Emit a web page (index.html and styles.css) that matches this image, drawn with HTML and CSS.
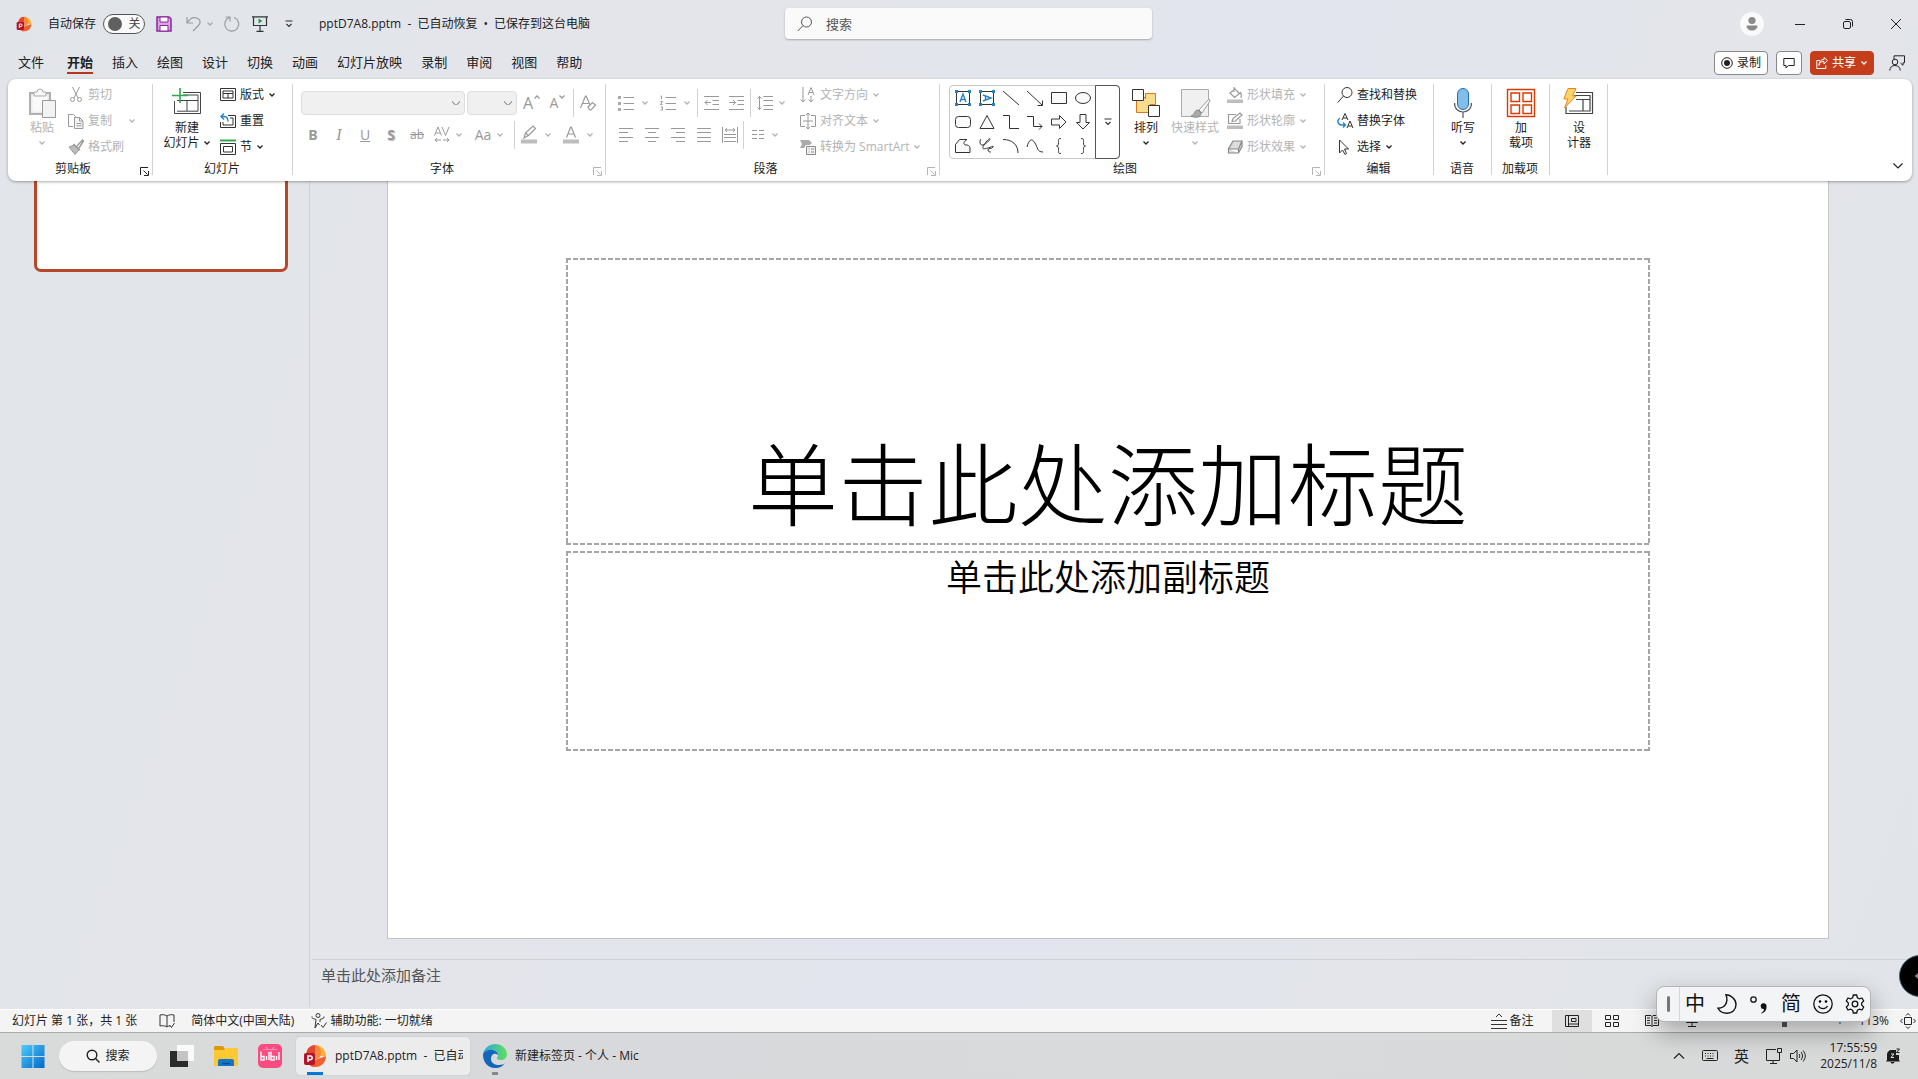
FILE: index.html
```html
<!DOCTYPE html>
<html lang="zh-CN">
<head>
<meta charset="utf-8">
<title>pptD7A8.pptm</title>
<link rel="stylesheet" href="styles.css">
</head>
<body>
<svg class="defs" aria-hidden="true">
  <symbol id="caret" viewBox="0 0 8 8"><path d="M1.5 2.5 4 5l2.5-2.5" fill="none" stroke="currentColor" stroke-width="1.3"/></symbol>
  <symbol id="launch" viewBox="0 0 9 9"><path d="M.5 8V.5H8M3.500 3.500 7.500 7.500M8.500 4v4.500H4" fill="none" stroke="currentColor"/></symbol>
  <symbol id="ppt" viewBox="0 0 24 24">
    <path d="M13 1a11 11 0 0 1 10 11H12z" fill="#ffb03a"/><path d="M12 1C6 1 3 6 3 12s3 11 9 11V12z" fill="#e2482d"/><path d="M12 1c4 0 6 4 6 8s-2 6-6 6z" fill="#f58a3c"/><path d="M23 12c0 6-4 11-11 11-3 0-5-2-6-5z" fill="#f0612f"/>
    <rect x="1" y="9" width="11" height="12" rx="2" fill="#b3142a"/><path d="M5 18v-6h2.300a1.800 1.800 0 0 1 0 3.700H5" fill="none" stroke="#fff" stroke-width="1.500"/>
  </symbol>
</svg>

<header class="titlebar">
  <div class="quick">
    <svg class="i16 logo"><use href="#ppt"/></svg>
    <label class="autosave" for="autosave">自动保存</label>
    <button id="autosave" class="toggle" role="switch" aria-checked="false"><span class="knob"></span>关</button>
    <button class="qbtn save" aria-label="保存"><svg class="i16" viewBox="0 0 16 16"><path d="M1 1h12l2 2v12H1z" fill="#d9a4e2" stroke="#8a259b" stroke-width="1.500"/><path d="M4 1h8v5H4zM4 9.500h8V15H4z" fill="#fff" stroke="#8a259b"/></svg></button>
    <button class="qbtn undo" aria-label="撤消"><svg class="i16" viewBox="0 0 16 16"><path d="M1 1v6h6M1 7c3-5 7-6 10-5 4 2 4 5 1 8l-5 5" fill="none" stroke="#9a9b9e" stroke-width="1.200"/></svg></button>
    <svg class="i8 faint undo-caret"><use href="#caret"/></svg>
    <button class="qbtn redo" aria-label="重复"><svg class="i16" viewBox="0 0 16 16"><path d="M1.500 1h4.500v4.500M10 1.500A7 7 0 1 1 5.500 1.500" fill="none" stroke="#9a9b9e" stroke-width="1.200"/></svg></button>
    <button class="qbtn show" aria-label="放映"><svg class="i16" viewBox="0 0 16 16"><path d="M0 .8h16M1.500 1v8.500h13V1M8 9.500V15M4.500 15.300h7" fill="none" stroke="#333" stroke-width="1.200"/><path d="M6.500 2.500v5l4-2.500z" fill="#1e9a47"/></svg></button>
    <button class="qbtn more" aria-label="自定义"><svg class="i8" viewBox="0 0 8 8"><path d="M.5 1h7M1.500 4 4 6.500 6.500 4" fill="none" stroke="#333" stroke-width="1.200"/></svg></button>
    <span class="doc">pptD7A8.pptm&nbsp; -&nbsp; 已自动恢复<i class="dot">•</i>已保存到这台电脑</span>
  </div>
  <div class="search">
    <svg class="i16" viewBox="0 0 16 16"><circle cx="9.500" cy="6" r="5" fill="none" stroke="#555"/><path d="M6 9.500.8 15" stroke="#555"/></svg>
    <input type="text" placeholder="搜索" aria-label="搜索">
  </div>
  <div class="win">
    <svg class="avatar" viewBox="0 0 24 24"><circle cx="12" cy="12" r="12" fill="#fafafa"/><circle cx="12" cy="8.500" r="3.600" fill="#8a8a8a"/><path d="M6.500 13.500h11c0 3.500-2.500 5-5.500 5s-5.500-1.500-5.500-5z" fill="#8a8a8a"/></svg>
    <button aria-label="最小化"><svg class="i12" viewBox="0 0 12 12"><path d="M1 6.500h10" stroke="#222"/></svg></button>
    <button aria-label="还原"><svg class="i12" viewBox="0 0 12 12"><rect x="1.500" y="3.500" width="7" height="7" rx="1.500" fill="none" stroke="#222"/><path d="M3.500 1.500h5a2 2 0 0 1 2 2v5" fill="none" stroke="#222"/></svg></button>
    <button aria-label="关闭"><svg class="i12" viewBox="0 0 12 12"><path d="m1 1 10 10M11 1 1 11" stroke="#222"/></svg></button>
  </div>
</header>

<nav class="tabs">
  <a href="#file" class="file">文件</a><a href="#home" class="on">开始</a><a href="#insert">插入</a><a href="#draw">绘图</a><a href="#design">设计</a><a href="#trans">切换</a><a href="#anim">动画</a><a href="#shows">幻灯片放映</a><a href="#rec">录制</a><a href="#review">审阅</a><a href="#view">视图</a><a href="#help">帮助</a>
  <div class="tab-actions">
    <button class="pill"><svg class="i12" viewBox="0 0 12 12"><circle cx="6" cy="6" r="5.300" fill="none" stroke="#222"/><circle cx="6" cy="6" r="3" fill="#222"/></svg>录制</button>
    <button class="pill note" aria-label="批注"><svg class="i12" viewBox="0 0 12 12"><path d="M.8 1.500h10.400v7H5.500L3 11V8.500H.8z" fill="none" stroke="#222"/></svg></button>
    <button class="pill share"><svg class="i12" viewBox="0 0 12 12"><path d="M4 3.500H.8v8h9V8.500M3 8.500c.5-3 2-4 5-4V7l3.500-3.500L8 .5v2c-3 0-5 2-5 6z" fill="none" stroke="#fff"/></svg>共享<svg class="i8"><use href="#caret"/></svg></button>
    <button class="plain" aria-label="在场"><svg class="i16" viewBox="0 0 16 16"><path d="M5 4V.8h10.500v7h-1.500v2.500L11.500 8" fill="none" stroke="#222"/><circle cx="6" cy="7" r="2.800" fill="none" stroke="#222"/><path d="M.8 15.500c0-3 2-5 5.200-5s5.200 2 5.200 5" fill="none" stroke="#222"/></svg></button>
  </div>
</nav>

<section class="ribbon">
  <div class="group g-clip">
    <div class="body">
      <button class="big off paste"><svg class="i30" viewBox="0 0 30 30"><path d="M3 5h20v21H3z" fill="#ececec" stroke="#b0b0b0" stroke-width="2"/><path d="M5.500 7.500h15v16h-15z" fill="#fafafa"/><path d="M7 8V4h3a3 3 0 0 1 6 0h3v4z" fill="#f8f8f8" stroke="#aaa"/><path d="M15.500 12.500h13v17h-13z" fill="#f3f3f3" stroke="#999"/></svg><span>粘贴</span><svg class="i8"><use href="#caret"/></svg></button>
      <div class="col">
        <button class="sm off"><svg class="i16" viewBox="0 0 16 16"><path d="m4.500 0 5.500 11M11.500 0 6 11" stroke="#999" fill="none"/><circle cx="4.500" cy="12.500" r="2" fill="none" stroke="#999"/><circle cx="11.500" cy="12.500" r="2" fill="none" stroke="#999"/></svg>剪切</button>
        <button class="sm off"><svg class="i16" viewBox="0 0 16 16"><path d="M5 13.500H.5V1.500h5l2 2" fill="none" stroke="#999"/><path d="M6.500 4.500h5l3.500 3.500v7.500H6.500zM11.500 4.500V8H15M8.500 10.500h5M8.500 12.800h5" fill="#f3f3f3" stroke="#999"/></svg>复制<svg class="i8 far"><use href="#caret"/></svg></button>
        <button class="sm off"><svg class="i16" viewBox="0 0 16 16"><path d="M1 8l5-2 5 5-4 4.500z" fill="#bbb" stroke="#999"/><path d="M5.500 5 12 11M9 7l5.500-6 1 1L11 9" fill="none" stroke="#999" stroke-width="1.400"/></svg>格式刷</button>
      </div>
    </div>
    <div class="label"><span>剪贴板</span><svg class="i9"><use href="#launch"/></svg></div>
  </div>

  <div class="group g-slides">
    <div class="body">
      <button class="big new"><svg class="i30" viewBox="0 0 30 30"><path d="M11 4.500h17.500v21h-26V13M5 23.200h21V7H11M15 12.500h11M15 12.500v10.500M5 12.500h10" fill="none" stroke="#444"/><path d="M8 0v15M0 7.500h16" stroke="#2fa84f" stroke-width="1.600"/></svg><span>新建</span><span>幻灯片<svg class="i8"><use href="#caret"/></svg></span></button>
      <div class="col">
        <button class="sm"><svg class="i16" viewBox="0 0 16 16"><path d="M.5 1.500h15v12H.5zM3 4h10v7H3zM3 6.500h10M8 6.500V11" fill="none" stroke="#333"/></svg>版式<svg class="i8"><use href="#caret"/></svg></button>
        <button class="sm"><svg class="i16" viewBox="0 0 16 16"><path d="M8 2.500h7.500v12H.5V9M10 5h3v7H3V9" fill="none" stroke="#333"/><path d="M4 .5 1 3.500l3 3M1 3.500h3c3 0 4 1.500 4 5" fill="none" stroke="#2583c7" stroke-width="1.400"/></svg>重置</button>
        <button class="sm"><svg class="i16" viewBox="0 0 16 16"><path d="M0 1.500h16" stroke="#2fa84f" stroke-width="2"/><path d="M.5 4.500h15v11H.5zM3.500 7.500h9v5.500h-9z" fill="none" stroke="#333"/></svg>节<svg class="i8"><use href="#caret"/></svg></button>
      </div>
    </div>
    <div class="label"><span>幻灯片</span></div>
  </div>

  <div class="group g-font off">
    <div class="rows">
      <div class="row">
        <select class="family" disabled aria-label="字体"><option></option></select>
        <select class="size" disabled aria-label="字号"><option></option></select>
        <button class="ic grow">A<svg class="i8 flip"><use href="#caret"/></svg></button>
        <button class="ic shrink">A<svg class="i8"><use href="#caret"/></svg></button>
        <i class="bar"></i>
        <button class="ic" aria-label="清除格式"><svg class="i16" viewBox="0 0 16 16"><path d="M.5 13 5.500 1h.6l4 9M2.500 8.500h6M8 12l4.500-4.500 3 2.500-4.500 5H9.500z" fill="none" stroke="#999" stroke-width="1.200"/></svg></button>
      </div>
      <div class="row styles">
        <button class="ic wide b">B</button><button class="ic wide it">I</button><button class="ic wide u">U</button><button class="ic wide s">S</button><button class="ic wide st">ab</button>
        <button class="ic" aria-label="字符间距"><svg class="i16" viewBox="0 0 16 16"><path d="M.5 8.500 4 0l3.500 8.500M1.800 6h4.400M8 0l3.500 8.500L15 0M.8 13H7M3 11l-2 2 2 2M9 13h6M13 11l2 2-2 2" fill="none" stroke="#999"/></svg></button><svg class="i8 sp"><use href="#caret"/></svg>
        <button class="ic aa gap">Aa</button><svg class="i8 sp"><use href="#caret"/></svg>
        <i class="bar lead"></i>
        <button class="ic" aria-label="突出显示"><svg class="i18" viewBox="0 0 16 18"><path d="M0 13.500h16v4H0z" fill="#bdbdbd"/><path d="M3 12l1.500-5L12 0l2.500 2.500-7 7zM4.500 7 7.500 9.500" fill="none" stroke="#999" stroke-width="1.200"/></svg></button><svg class="i8 sp2"><use href="#caret"/></svg>
        <button class="ic gap" aria-label="字体颜色"><svg class="i18" viewBox="0 0 16 18"><path d="M0 13.500h16v4H0z" fill="#bdbdbd"/><path d="M3.500 11.500 7.700 1h.6l4.200 10.500M5 8h6" fill="none" stroke="#999" stroke-width="1.200"/></svg></button><svg class="i8 sp2"><use href="#caret"/></svg>
      </div>
    </div>
    <div class="label"><span>字体</span><svg class="i9"><use href="#launch"/></svg></div>
  </div>

  <div class="group g-para off">
    <div class="body">
    <div class="rows">
      <div class="row">
        <button class="ic" aria-label="项目符号"><svg class="i16" viewBox="0 0 16 16"><path d="M5.500 2.500H16M5.500 8.500H16M5.500 14.500H16" stroke="#999"/><path d="M0 1h3v3H0zM0 7h3v3H0zM0 13h3v3H0z" fill="#aaa"/></svg></button><svg class="i8 sp2"><use href="#caret"/></svg>
        <button class="ic gap" aria-label="编号"><svg class="i16" viewBox="0 0 16 16"><path d="M5.500 2.500H16M5.500 8.500H16M5.500 14.500H16M.5 1h1v3M.5 6.500h2L.5 9.500h2M.5 12h2v3h-2" fill="none" stroke="#999"/></svg></button><svg class="i8 sp2"><use href="#caret"/></svg>
        <i class="bar near"></i>
        <button class="ic" aria-label="减少缩进"><svg class="i16" viewBox="0 0 16 16"><path d="M0 1.500h15M8.500 5.500H15M8.500 9.500H15M0 14.500h15M1 7.500h6M3.500 5 1 7.500 3.500 10" fill="none" stroke="#999"/></svg></button>
        <button class="ic wide" aria-label="增加缩进"><svg class="i16" viewBox="0 0 16 16"><path d="M0 1.500h15M8.500 5.500H15M8.500 9.500H15M0 14.500h15M.5 7.500h6M4 5l2.500 2.500L4 10" fill="none" stroke="#999"/></svg></button>
        <i class="bar flush"></i>
        <button class="ic" aria-label="行距"><svg class="i16" viewBox="0 0 16 16"><path d="M6.500 1.500H16M6.500 5.500H16M6.500 10.500H16M6.500 14.500H16M2.500 1v14M.5 3.500l2-2 2 2M.5 12.500l2 2 2-2" fill="none" stroke="#999"/></svg></button><svg class="i8 sp"><use href="#caret"/></svg>
      </div>
      <div class="row styles">
        <button class="ic wide" aria-label="左对齐"><svg class="i16" viewBox="0 0 16 16"><path d="M1 1.500h14M1 5.500h9M1 10.500h14M1 14.500h9" stroke="#999"/></svg></button><button class="ic wide" aria-label="居中"><svg class="i16" viewBox="0 0 16 16"><path d="M1 1.500h14M4 5.500h8M1 10.500h14M4 14.500h8" stroke="#999"/></svg></button><button class="ic wide" aria-label="右对齐"><svg class="i16" viewBox="0 0 16 16"><path d="M1 1.500h14M6 5.500h9M1 10.500h14M6 14.500h9" stroke="#999"/></svg></button><button class="ic wide" aria-label="两端对齐"><svg class="i16" viewBox="0 0 16 16"><path d="M1 1.500h14M1 5.500h14M1 10.500h14M1 14.500h14" stroke="#999"/></svg></button><button class="ic wide" aria-label="分散对齐"><svg class="i16" viewBox="0 0 16 16"><path d="M.5 0v16M15.500 0v16M2 7.500h12M2 10.500h12M2 14.500h12M3 3h10M5 1 3 3l2 2M11 1l2 2-2 2" fill="none" stroke="#999"/></svg></button>
        <i class="bar flush"></i>
        <button class="ic" aria-label="分栏"><svg class="i12" viewBox="0 0 12 12"><path d="M0 1.500h5M0 5.500h5M0 9.500h5M7 1.500h5M7 5.500h5M7 9.500h5" stroke="#999"/></svg></button><svg class="i8 sp"><use href="#caret"/></svg>
      </div>
    </div>
    <div class="col">
      <button class="sm off"><svg class="i16" viewBox="0 0 16 16"><path d="M3 0v15M.5 12.500 3 15l2.500-2.500M11 9v6M8.500 12.500 11 15l2.500-2.500M8 8l3-7.500L14 8M9 5.500h4" fill="none" stroke="#999"/></svg>文字方向<svg class="i8"><use href="#caret"/></svg></button>
      <button class="sm off"><svg class="i16" viewBox="0 0 16 16"><path d="M5 2.500H.5v11H5M11 2.500h4.500v11H11M8 0v16M6 2l2-2 2 2M6 14l2 2 2-2M3 8h10" fill="none" stroke="#999"/></svg>对齐文本<svg class="i8"><use href="#caret"/></svg></button>
      <button class="sm off"><svg class="i16" viewBox="0 0 16 16"><path d="M0 1h9l3 3-2 2H6L4 9H0l2-4z" fill="#aaa"/><path d="M6.500 7.500h9v8h-9zM8.500 10h1M11 10h3M8.500 13h1M11 13h3" fill="#f3f3f3" stroke="#888"/></svg>转换为 SmartArt<svg class="i8"><use href="#caret"/></svg></button>
    </div>
    </div>
    <div class="label"><span>段落</span><svg class="i9"><use href="#launch"/></svg></div>
  </div>

  <div class="group g-draw">
    <div class="body">
      <div class="gallery">
        <div class="shapes">
          <svg class="i16" viewBox="0 0 16 16"><path d="M1.500 1.500h13v13h-13z" fill="none" stroke="#333"/><path d="M0 0h3v3H0zM13 0h3v3h-3zM0 13h3v3H0zM13 13h3v3h-3z" fill="#2583c7"/><path d="M5 12l3-8 3 8M6 9.500h4" fill="none" stroke="#2583c7" stroke-width="1.400"/></svg>
          <svg class="i16" viewBox="0 0 16 16"><path d="M1.500 1.500h13v13h-13z" fill="none" stroke="#333"/><path d="M0 0h3v3H0zM13 0h3v3h-3zM0 13h3v3H0zM13 13h3v3h-3z" fill="#2583c7"/><path d="M4 5l8 3-8 3M6.500 6v4" fill="none" stroke="#2583c7" stroke-width="1.400"/></svg>
          <svg class="i16" viewBox="0 0 16 16"><path d="m0 1 16 14" stroke="#333"/></svg>
          <svg class="i16" viewBox="0 0 16 16"><path d="m0 1 15 14M15.500 10.500v5h-5" fill="none" stroke="#333"/></svg>
          <svg class="i16" viewBox="0 0 16 16"><path d="M.5 2.500h15v11H.5z" fill="#fafafa" stroke="#333"/></svg>
          <svg class="i16" viewBox="0 0 16 16"><ellipse cx="8" cy="8" rx="7.500" ry="5.500" fill="#fafafa" stroke="#333"/></svg>
          <svg class="i16" viewBox="0 0 16 16"><rect x=".5" y="2.500" width="15" height="11" rx="3" fill="#fafafa" stroke="#333"/></svg>
          <svg class="i16" viewBox="0 0 16 16"><path d="M8 1.500 15 14.500H1z" fill="#fafafa" stroke="#333"/></svg>
          <svg class="i16" viewBox="0 0 16 16"><path d="M0 1.500h6.500v13H16" fill="none" stroke="#333"/></svg>
          <svg class="i16" viewBox="0 0 16 16"><path d="M0 2.500h6.500v10H15M12 9.500l3 3-3 3" fill="none" stroke="#333"/></svg>
          <svg class="i16" viewBox="0 0 16 16"><path d="M.5 5h8V1.500L15 8l-6.500 6.500V11h-8z" fill="#fafafa" stroke="#333"/></svg>
          <svg class="i16" viewBox="0 0 16 16"><path d="M5 .5h6v8h3.500L8 15 1.500 8.500H5z" fill="#fafafa" stroke="#333"/></svg>
          <svg class="i16" viewBox="0 0 16 16"><path d="M.5 14.500v-8l4-5h7.500c-3 2-4 4-2 5.500 3-.5 5 1 5 3v4.500z" fill="#fafafa" stroke="#333"/></svg>
          <svg class="i16" viewBox="0 0 16 16"><path d="M2 1C0 3 1 8 4 7s7-5 7-6-3 1-6 6 0 4 4 3 6-3 5-1-5 1-5 3 2 2 3 2" fill="none" stroke="#333"/></svg>
          <svg class="i16" viewBox="0 0 16 16"><path d="M0 1.500c9 0 15 5 15 13.500" fill="none" stroke="#333"/></svg>
          <svg class="i16" viewBox="0 0 16 16"><path d="M0 9c2-8 5-9 8-4s2 9 8 9" fill="none" stroke="#333"/></svg>
          <svg class="i16" viewBox="0 0 16 16"><path d="M10 .5c-3 0-2.500 1-2.500 4S7 8 5.500 8c1.500 0 2 .5 2 3.500s-.5 4 2.500 4" fill="none" stroke="#333"/></svg>
          <svg class="i16" viewBox="0 0 16 16"><path d="M6 .5c3 0 2.500 1 2.500 4S9 8 10.500 8c-1.500 0-2 .5-2 3.500s.5 4-2.500 4" fill="none" stroke="#333"/></svg>
        </div>
        <button class="expand" aria-label="其他形状"><svg class="i8" viewBox="0 0 8 8"><path d="M.5 1h7M1.500 4 4 6.500 6.500 4" fill="none" stroke="#333" stroke-width="1.200"/></svg></button>
      </div>
      <button class="big arrange"><svg class="i30" viewBox="0 0 30 30"><path d="M5.500 9.500h14v15h-14z" fill="#f9dd8f" stroke="#e0761a"/><path d="M14.500 5.500h10v11h-10z" fill="#f9dd8f" stroke="#e0761a"/><path d="M7 11h12v12H7z" fill="#f9dd8f"/><path d="M1.500 1.500h11v11h-11zM17.500 17.500h11v11h-11z" fill="#fff" stroke="#333"/></svg><span>排列</span><svg class="i8"><use href="#caret"/></svg></button>
      <button class="big off quickstyle"><svg class="i30" viewBox="0 0 30 30"><path d="M1.500 1.500h27v27h-27z" fill="#f0f0f0" stroke="#aaa"/><path d="M29 11 19 22l3 3 8-12z" fill="#fafafa" stroke="#999"/><path d="M18 22c-4 0-3 5-7 6 4 2 10 2 10-3z" fill="#aaa" stroke="#888"/></svg><span>快速样式</span><svg class="i8"><use href="#caret"/></svg></button>
      <div class="col">
        <button class="sm off"><svg class="i16" viewBox="0 0 16 16"><path d="M0 12.500h16v3.500H0z" fill="#bdbdbd"/><path d="M3 6l5-4 4.500 4.500-5 4zM7 0v5M13 5c2 2 1.500 4 1 6" fill="none" stroke="#999" stroke-width="1.200"/></svg>形状填充<svg class="i8"><use href="#caret"/></svg></button>
        <button class="sm off"><svg class="i16" viewBox="0 0 16 16"><path d="M0 12.500h16v3.500H0z" fill="#bdbdbd"/><path d="M9 1.500H1.500v9H13V6M5 8.500l1-3L13 0l2 2-6.500 6z" fill="none" stroke="#999" stroke-width="1.200"/></svg>形状轮廓<svg class="i8"><use href="#caret"/></svg></button>
        <button class="sm off"><svg class="i16" viewBox="0 0 16 16"><path d="M6 2h9l-3.500 8H1.500zM15 2v5.500L11.500 14v-4M1.500 10v4h10" fill="#ddd" stroke="#888" stroke-width="1.200"/></svg>形状效果<svg class="i8"><use href="#caret"/></svg></button>
      </div>
    </div>
    <div class="label off"><span>绘图</span><svg class="i9"><use href="#launch"/></svg></div>
  </div>

  <div class="group g-edit">
    <div class="body"><div class="col">
      <button class="sm"><svg class="i16" viewBox="0 0 16 16"><circle cx="10" cy="5.500" r="5" fill="none" stroke="#333"/><path d="M6.500 9 .8 15.500" stroke="#333"/></svg>查找和替换</button>
      <button class="sm"><svg class="i16" viewBox="0 0 16 16"><path d="m5 7 3-6.500L11 7M6 5h4M10 15l3-7 3 7M11 13h4" fill="none" stroke="#333"/><path d="M3 5c-3 2-3 6 1 7h4M6 9.500 8.500 12 6 14.500" fill="none" stroke="#2583c7" stroke-width="1.300"/></svg>替换字体</button>
      <button class="sm"><svg class="i16" viewBox="0 0 16 16"><path d="M2.500 1v13l3-3 2.500 4.500 1.500-1L7.500 10h4z" fill="none" stroke="#333"/></svg>选择<svg class="i8"><use href="#caret"/></svg></button>
    </div></div>
    <div class="label"><span>编辑</span></div>
  </div>

  <div class="group g-one">
    <div class="body"><button class="big"><svg class="i30" viewBox="0 0 30 30"><rect x="9.500" y=".5" width="11" height="21" rx="5.500" fill="#83bdea" stroke="#1f6fb5"/><path d="M6.500 15c0 12 17 12 17 0M15 24v6" fill="none" stroke="#555" stroke-width="1.200"/></svg><span>听写</span><svg class="i8"><use href="#caret"/></svg></button></div>
    <div class="label"><span>语音</span></div>
  </div>
  <div class="group g-one">
    <div class="body"><button class="big"><svg class="i30" viewBox="0 0 30 30"><path d="M1.500 1.500h27v27h-27zM5 5h8.500v8.500H5zM17 5h8.500v8.500H17zM5 17h8.500v8.500H5zM17 17h8.500v8.500H17z" fill="none" stroke="#d83b01" stroke-width="1.400"/></svg><span>加</span><span>载项</span></button></div>
    <div class="label"><span>加载项</span></div>
  </div>
  <div class="group g-one">
    <div class="body"><button class="big"><svg class="i30" viewBox="0 0 30 30"><path d="M12 4.500h16.500v21H2V19M10 7.500h16v15.500H5M12 11.500h14M19 11.500V23" fill="none" stroke="#444" stroke-width="1.200"/><path d="M4 .5h8L8.500 8H12L.5 20 4 11H-.2z" fill="#fdd46b" stroke="#e8861d"/></svg><span>设</span><span>计器</span></button></div>
    <div class="label"></div>
  </div>
  <button class="collapse" aria-label="折叠功能区"><svg class="i12" viewBox="0 0 12 12"><path d="m1.500 3.500 4.500 4.500 4.500-4.500" fill="none" stroke="#222" stroke-width="1.200"/></svg></button>
</section>

<main class="work">
  <aside class="thumbs"><div class="thumb"></div></aside>
  <div class="stage">
    <article class="slide">
      <div class="ph ph-title"><h1>单击此处添加标题</h1></div>
      <div class="ph ph-sub"><h2>单击此处添加副标题</h2></div>
    </article>
    <div class="notes">单击此处添加备注</div>
  </div>
</main>

<footer class="status">
  <span class="count">幻灯片 第 1 张，共 1 张</span>
  <svg class="i16 book" viewBox="0 0 16 16"><path d="M8 3C6 1.500 3 1.500 1 2v11c2-.5 5-.5 7 1 1-1 2-1 3-1M8 3c2-1.500 5-1.500 7-1v7M8 3v11M10.500 12l2 2.500 3-4.500" fill="none" stroke="#333"/></svg>
  <span>简体中文(中国大陆)</span>
  <svg class="i16 acc" viewBox="0 0 16 16"><circle cx="7" cy="2.500" r="2" fill="none" stroke="#333"/><path d="M1 3.500c-1 2 3 2.500 4 3L4 15l3-5 1.500 2M13 3.500c1 2-3 2.500-4 3V9M10 12l2 2.500 3.500-5" fill="none" stroke="#333"/></svg>
  <span>辅助功能: 一切就绪</span>
  <div class="views">
    <button class="vnote"><svg class="i16" viewBox="0 0 16 16"><path d="M0 7.500h16M0 11.500h16M0 15.500h16M5 4l3-3 3 3" fill="none" stroke="#333"/></svg>备注</button>
    <button class="vbtn on" aria-label="普通"><svg class="i14" viewBox="0 0 14 14"><path d="M.5 1.500h13v11H.5zM3.500 1.500v11M3.500 10h10M6.500 4.500h4.500v3H6.500z" fill="none" stroke="#222"/></svg></button>
    <button class="vbtn" aria-label="浏览"><svg class="i14" viewBox="0 0 14 14"><path d="M.5 1.500h5v4h-5zM8.500 1.500h5v4h-5zM.5 8.500h5v4h-5zM8.500 8.500h5v4h-5z" fill="none" stroke="#222"/></svg></button>
    <button class="vbtn" aria-label="阅读"><svg class="i14" viewBox="0 0 14 14"><path d="M.5 1.500H6l1 1 1-1h5.500v10H8l-1 1-1-1H.5zM7 2.500v10M2 4h3M2 6.500h3M2 9h3M9 4h3M9 6.500h3M9 9h3" fill="none" stroke="#222"/></svg></button>
    <button class="vbtn" aria-label="放映"><svg class="i14" viewBox="0 0 14 14"><path d="M.5 1.500h13M1.500 1.500v7h11v-7M7 8.500v4M3 12.500h8" fill="none" stroke="#222"/></svg></button>
    <input class="zoom" type="range" min="0" max="100" value="53" aria-label="缩放">
    <span class="plus">+</span>
    <span class="pct">113%</span>
    <svg class="i16" viewBox="0 0 16 16"><path d="M4.500 4.500h7v7h-7zM6 2.500l2-2 2 2M6 13.500l2 2 2-2M2.500 6l-2 2 2 2M13.500 6l2 2-2 2" fill="none" stroke="#222"/></svg>
  </div>
</footer>

<div class="taskbar">
  <button class="tb" aria-label="开始"><svg class="i24" viewBox="0 0 24 24"><defs><linearGradient id="wg" x1="0" y1="0" x2="1" y2="1"><stop offset="0" stop-color="#4ccbfa"/><stop offset="1" stop-color="#0468c8"/></linearGradient></defs><path d="M.5 1h11v11H.5zM12.500 1h11v11h-11zM.5 13h11v11H.5zM12.500 13h11v11h-11z" fill="url(#wg)"/></svg></button>
  <button class="tsearch"><svg class="i14" viewBox="0 0 14 14"><circle cx="6" cy="6" r="4.800" fill="none" stroke="#222" stroke-width="1.400"/><path d="m9.500 9.500 4 4" stroke="#222" stroke-width="1.400"/></svg>搜索</button>
  <button class="tb" aria-label="任务视图"><svg class="i24" viewBox="0 0 24 24"><path d="M7 1h17v16H7z" fill="#fafafa"/><path d="M0 7h18v16H0z" fill="#2b2b2b"/><path d="M7 7h11v10H7z" fill="#c4c4c4"/></svg></button>
  <button class="tb" aria-label="文件资源管理器"><svg class="i24" viewBox="0 0 24 24"><path d="M0 3a1 1 0 0 1 1-1h8l2 3v4H0z" fill="#dc9a10"/><path d="M0 6h10l2-2h12v18H0z" fill="#fcc935"/><path d="M4 22v-5a2 2 0 0 1 2-2h12a2 2 0 0 1 2 2v5z" fill="#1375c9"/><path d="M8 19.500h8" stroke="#0a4d90" stroke-width="1.500"/></svg></button>
  <button class="tb" aria-label="bilibili"><svg class="i24" viewBox="0 0 24 24"><rect width="24" height="24" rx="5" fill="#fb4c82"/><path d="M5 5.500h14M8 3l2 2.500M16 3l-2 2.500" stroke="#ff8fb3" stroke-width="1.200"/><path d="M3 7.500V16h3v-3.500H3M8.500 12v4M11 8v8M13 7.500V16h3v-3.500h-3M18.500 12v4M21 8v8" fill="none" stroke="#fff" stroke-width="1.400"/></svg></button>
  <button class="task on"><svg class="i24"><use href="#ppt"/></svg><span>pptD7A8.pptm&nbsp; -&nbsp; 已自动恢复</span></button>
  <button class="task edge"><svg class="i24" viewBox="0 0 24 24"><defs><linearGradient id="eg" x1="0" y1="0" x2="1" y2="0"><stop offset="0" stop-color="#2aa6e4"/><stop offset="1" stop-color="#5fe05a"/></linearGradient></defs><path d="M0 11C1 4 6 0 12 0c7 0 12 5 12 10 0 4-3 6-6 6-3 0-4-1-4-2s1-1 1-3c0-3-3-5-6-5-5 0-8 3-9 5z" fill="url(#eg)"/><path d="M0 11c0-3 4-5 8-5 4 0 7 2 7 5-4-3-7 0-7 4 0 4 4 6 8 6 3 0 5-1 6-2-2 3-5 5-10 5C5 24 0 18 0 11z" fill="#1467b8"/></svg><span>新建标签页 - 个人 - Mic</span></button>
  <div class="tray">
    <svg class="i12 up" viewBox="0 0 12 12"><path d="m1 8.500 5-5 5 5" fill="none" stroke="#222" stroke-width="1.200"/></svg>
    <svg class="i16 kb" viewBox="0 0 16 16"><rect x=".5" y="2.500" width="15" height="10" rx="1" fill="none" stroke="#222"/><path d="M3 5.500h10M3 8h10" stroke="#222" stroke-dasharray="1 1.500"/><path d="M4.500 10.500h7" stroke="#222"/></svg>
    <span class="lang">英</span>
    <svg class="i16" viewBox="0 0 16 16"><path d="M10 1.500H.5v11h13V9M7 12.500v3M4 15.500h7M11.500.5h4v4h-4zM13.500 4.500V9" fill="none" stroke="#222"/></svg>
    <svg class="i16 spk" viewBox="0 0 16 16"><path d="M.5 5.500h3L7 2v12l-3.500-3.500h-3zM9 6c1 1.500 1 2.500 0 4M11 4c2 2.500 2 5.500 0 8M13 2.500c3 3.500 3 7.500 0 11" fill="none" stroke="#222"/></svg>
    <time class="clock"><span>17:55:59</span><span>2025/11/8</span></time>
    <svg class="i16 bell" viewBox="0 0 16 16"><path d="M2 12V7c0-3 2-5 5-5h4v5h3v5l1 1.500H1zM5.500 14h4c-.5 2-3.500 2-4 0z" fill="#1c1c1c"/><path d="M6 6h3L6 9.500h3" fill="none" stroke="#ddd"/><path d="M11.500 1h3l-3 3.500h3" fill="none" stroke="#1c1c1c"/></svg>
  </div>
</div>

<div class="ime">
  <div class="grip"><i></i></div>
  <span>中</span>
  <svg class="i20" viewBox="0 0 20 20"><path d="M9 .8C14 1 19 5 19 10.500 19 16 15 19.200 10 19.200c-4 0-7.500-2-9-5C7 14.500 12 9 9 .8z" fill="none" stroke="#111" stroke-width="1.400"/></svg>
  <svg class="i20" viewBox="0 0 20 20"><circle cx="4.500" cy="5.500" r="2.700" fill="none" stroke="#111" stroke-width="1.300"/><path d="M12 19c2-1 3-2.500 3-4a2.900 2.900 0 1 1 2.500-3c.3 3-1 6.500-5 7.500z" fill="#111"/></svg>
  <span>简</span>
  <svg class="i20" viewBox="0 0 20 20"><circle cx="10" cy="10" r="9.200" fill="none" stroke="#111" stroke-width="1.300"/><circle cx="7" cy="7.500" r="1.300"/><circle cx="13" cy="7.500" r="1.300"/><path d="M5.500 12c2 3.500 7 3.500 9 0" fill="none" stroke="#111" stroke-width="1.300"/></svg>
  <svg class="i20" viewBox="0 0 20 20"><path d="M8.300 1h3.400l.6 2.700 2 1.100L17 4l1.700 3-2 1.900v2.200l2 1.900L17 16l-2.700-.8-2 1.100-.6 2.700H8.300l-.6-2.700-2-1.100L3 16l-1.700-3 2-1.900V8.900l-2-1.900L3 4l2.700.8 2-1.100z" fill="none" stroke="#111" stroke-width="1.300" stroke-linejoin="round"/><circle cx="10" cy="10" r="2.800" fill="none" stroke="#111" stroke-width="1.300"/></svg>
</div>
<button class="dock" aria-label="展开"><svg class="i12" viewBox="0 0 12 12"><path d="M10 1 4 6l6 5" fill="none" stroke="#999" stroke-width="1.600"/></svg></button>
</body>
</html>
```
FILE: styles.css
```css
* { box-sizing: border-box; }
html, body { height: 100%; margin: 0; }
body {
  display: flex; flex-direction: column; overflow: hidden; position: relative;
  font: 12px/16px "Open Sans", "Noto Sans CJK SC", sans-serif; color: #222;
  background: linear-gradient(110deg, #e1e5ea, #e4e5ea 30%, #e2e5ee 55%, #e3e5ea 75%, #e1e4e9);
}
button, input, select { font: inherit; color: inherit; border: 0; background: none; padding: 0; margin: 0; }
button { display: flex; align-items: center; justify-content: center; white-space: nowrap; }
a { color: inherit; text-decoration: none; }
svg { flex: none; display: block; overflow: visible; }
.defs { position: absolute; width: 0; height: 0; }
.i8 { width: 8px; height: 8px; }
.i9 { width: 9px; height: 9px; }
.i12 { width: 12px; height: 12px; }
.i14 { width: 14px; height: 14px; }
.i16 { width: 16px; height: 16px; }
.i18 { width: 16px; height: 18px; }
.i20 { width: 20px; height: 20px; }
.i24 { width: 24px; height: 24px; }
.i30 { width: 30px; height: 30px; }
.faint { color: #aaa; }

/* title bar */
.titlebar { flex: none; height: 47px; display: grid; grid-template-columns: 785fr 367px 766fr; align-items: center; }
.quick { display: flex; align-items: center; padding-left: 16px; min-width: 0; white-space: nowrap; }
.autosave { margin-left: 16px; }
.toggle { width: 42px; height: 20px; margin-left: 7px; border: 1px solid #555; border-radius: 10px; background: #fafafa; gap: 7px; color: #444; }
.knob { width: 14px; height: 14px; border-radius: 50%; background: #606060; }
.save { margin-left: 11px; }
.undo { margin-left: 14px; }
.undo-caret { margin-left: 4px; }
.redo { margin-left: 10px; }
.show { margin-left: 12px; }
.more { margin-left: 17px; }
.doc { margin-left: 26px; }
.dot { font-style: normal; margin: 0 6px; }
.search { display: flex; align-items: center; height: 31px; padding-left: 12px; gap: 13px; background: #fafafa; border-radius: 4px; box-shadow: 0 1px 2px #0004; }
.search input { flex: 1; min-width: 0; outline: 0; font-size: 13px; }
.search input::placeholder { color: #555; opacity: 1; }
.win { display: flex; align-items: center; justify-content: flex-end; padding-right: 16px; gap: 36px; }
.avatar { width: 24px; height: 24px; margin-right: -6px; }

/* tabs */
.tabs { flex: none; height: 32px; display: flex; align-items: center; gap: 19px; padding: 0 13px 0 18px; font-size: 13px; }
.tabs > a { line-height: 20px; border-bottom: 2px solid transparent; }
.file { margin-right: 4px; }
.tabs .on { font-weight: 700; border-bottom-color: #b7351a; }
.tab-actions { margin-left: auto; display: flex; gap: 8px; font-size: 12px; }
.pill { height: 24px; padding: 0 6px; gap: 4px; border: 1px solid #888; border-radius: 4px; background: #fdfdfd; line-height: 14px; }
.share { border-color: #c43e1c; background: #c43e1c; color: #fff; padding: 0 5px; }
.plain { margin-left: 7px; }

/* ribbon */
.ribbon { flex: none; height: 102px; margin: 0 6px 0 8px; padding-top: 3px; display: flex; background: #fff; border-radius: 8px; box-shadow: 0 1px 3px #0005; position: relative; }
.group { flex: none; display: flex; flex-direction: column; background: linear-gradient(#d2d2d2, #d2d2d2) right 2px / 1px 91px no-repeat; }
.g-clip { width: 145px; }
.g-slides { width: 140px; }
.g-font { width: 313px; }
.g-para { width: 334px; }
.g-draw { width: 385px; }
.g-edit { width: 109px; }
.g-one { width: 58px; }
.off { color: #b3b3b3; }
.body { display: flex; height: 78px; }
.col { display: flex; flex-direction: column; }
.sm { height: 26px; gap: 4px; justify-content: flex-start; }
.far { margin-left: 12px; }
.big { flex-direction: column; justify-content: flex-start; padding-top: 6px; line-height: 15px; }
.big .i30 { margin-bottom: 2px; }
.big > .i8 { margin-top: 4px; }
.big span { display: flex; align-items: center; gap: 3px; }
.paste { width: 46px; margin-left: 11px; margin-right: 3px; }
.new { width: 50px; margin-left: 9px; margin-right: 8px; }
.g-one .big { width: 100%; }
.label { height: 18px; display: flex; align-items: center; text-align: center; padding-right: 4px; }
.label:not(:has(svg)) { padding-right: 0; }
.label span { flex: 1; color: #222; padding-right: 2px; }
.label .i9 { margin-top: 4px; }
.rows { padding-top: 5px; height: 78px; }
.row { height: 32px; display: flex; align-items: center; }
.g-font .rows { padding-left: 8px; }
.g-font .styles, .g-para .styles { margin-left: -1px; }
.g-para .rows { width: 194px; padding-left: 8px; }
.ic { width: 24px; height: 24px; font-size: 14px; color: #999; }
.wide { width: 26px; }
.sp { margin: 0 1px; }
.sp2 { margin: 0 0 0 3px; }
.gap { margin-left: 7px; }
.bar { width: 1px; height: 28px; background: #d2d2d2; margin: 0 2px; }
.lead { margin-left: 9px; }
.near { margin-left: 6px; }
.flush { margin-left: 0; }
.family, .size { appearance: none; height: 24px; border: 1px solid #ddd; border-radius: 4px; opacity: 1;
  background: linear-gradient(45deg, transparent 50%, #aaa 50% 75%, transparent 75%) right 7px center / 4px 4px no-repeat, linear-gradient(-45deg, transparent 50%, #aaa 50% 75%, transparent 75%) right 3px center / 4px 4px no-repeat, #f0f0f0;
  background: linear-gradient(45deg, #f0f0f000 35%, #aaa 35% 60%, #f0f0f000 60%) right 8px center / 4px 4px no-repeat, linear-gradient(-45deg, #f0f0f000 35%, #aaa 35% 60%, #f0f0f000 60%) right 4px center / 4px 4px no-repeat, #f0f0f0; }
.family { width: 164px; margin-right: 2px; }
.size { width: 50px; margin-right: 2px; }
.grow, .shrink { align-items: center; width: 26px; font-size: 16px; }
.shrink { font-size: 14px; }
.grow svg, .shrink svg { margin-bottom: 12px; }
.flip { transform: rotate(180deg); }
.b { font-weight: 700; }
.it { font-family: "Liberation Serif", serif; font-style: italic; font-size: 16px; }
.u { text-decoration: underline; }
.s { font-weight: 700; text-shadow: 1px 1px 1px #bbb; }
.st { text-decoration: line-through; font-size: 12px; }
.gallery { display: flex; width: 171px; height: 74px; margin: 3px 0 0 9px; border: 1px solid #c8c8c8; border-radius: 4px; }
.shapes { flex: 1; display: grid; grid-template-columns: repeat(6, 24px); grid-template-rows: repeat(3, 24px); place-items: center; padding-left: 1px; }
.expand { width: 25px; margin: -1px; border: 1px solid #555; border-radius: 0 4px 4px 0; }
.arrange { width: 34px; margin-left: 9px; }
.quickstyle { width: 52px; margin: 0 6px 0 6px; }
.g-edit .col { padding-left: 12px; }
.collapse { margin: 76px 8px 0 auto; height: 16px; }

/* work area */
.work { flex: 1; min-height: 0; display: flex; }
.thumbs { width: 310px; border-right: 1px solid #d0d2d6; margin-bottom: 2px; padding-left: 34px; flex: none; }
.thumb { width: 254px; height: 91px; background: #fff; border: 3px solid #b7472a; border-top: 0; border-radius: 0 0 7px 7px; }
.stage { flex: 1; display: flex; flex-direction: column; min-width: 0; }
.slide { flex: 1; margin: 0 89px 20px 77px; padding: 77px 178px 0 178px; background: #fff; border: 1px solid #c4c6ca; border-top: 0; }
.ph {
  --h: repeating-linear-gradient(90deg, #a6a6a6 0 5px, transparent 5px 7px);
  --v: repeating-linear-gradient(#a6a6a6 0 5px, transparent 5px 7px);
  background: var(--h) top / 100% 2px no-repeat, var(--h) bottom / 100% 2px no-repeat, var(--v) left / 2px 100% no-repeat, var(--v) right / 2px 100% no-repeat;
  display: flex; justify-content: center; color: #000;
}
.ph-title { height: 287px; margin-bottom: 6px; padding-bottom: 7px; align-items: flex-end; }
.ph-sub { height: 200px; }
.ph h1, .ph h2 { margin: 0; font-family: "Noto Sans CJK SC", sans-serif; font-weight: 300; white-space: nowrap; }
.ph h1 { font-size: 90px; line-height: 116px; }
.ph h2 { font-size: 36px; line-height: 48px; font-weight: 350; }
.notes { height: 50px; margin-left: 2px; padding: 7px 9px; border-top: 1px solid #cfd1d5; color: #555; font-size: 15px; }

/* status bar */
.status { flex: none; height: 24px; display: flex; align-items: center; padding: 0 2px 0 12px; background: #f4f4f4; border-top: 1px solid #fff; border-bottom: 1px solid #aaa; }
.status > span { white-space: nowrap; }
.count { word-break: keep-all; }
.book { margin: 0 16px 0 22px; }
.acc { margin: 0 3px 0 17px; }
.views { margin-left: auto; display: flex; align-items: center; align-self: stretch; }
.vnote { gap: 2px; margin-right: 19px; }
.vbtn { width: 40px; align-self: stretch; }
.vbtn.on { background: #dfdfdf; }
.zoom { appearance: none; width: 100px; height: 12px; margin-left: 19px; background: linear-gradient(#777, #777) center / 100% 1px no-repeat; }
.zoom::-webkit-slider-thumb { appearance: none; width: 5px; height: 12px; background: #555; }
.plus { margin-left: 5px; width: 10px; }
.pct { margin: 0 11px 0 12px; }

/* taskbar */
.taskbar { flex: none; height: 46px; display: flex; align-items: center; padding: 0 17px 0 11px; background: linear-gradient(90deg, #d9dbda, #d8d9dc 30%, #d9dadb 60%, #d8d9d9); }
.tb { width: 44px; height: 40px; }
.tsearch { width: 98px; height: 30px; margin: 0 3px 0 4px; gap: 5px; border-radius: 15px; background: #f4f4f4; box-shadow: 0 1px 1px #0002; }
.task { height: 38px; width: 174px; padding: 0 7px; gap: 8px; justify-content: flex-start; border-radius: 4px; }
.task span { overflow: hidden; }
.task.on { margin-left: 4px; background: linear-gradient(#0078d4, #0078d4) 11px 100% / 16px 3px no-repeat, #ececed; box-shadow: 0 0 1px #0004; }
.task.edge { margin-left: 6px; background: linear-gradient(#888, #888) 16px 100% / 6px 3px no-repeat; }
.tray { margin-left: auto; display: flex; align-items: center; }
.kb { margin: 0 16px 0 17px; }
.lang { font-size: 15px; margin-right: 17px; }
.spk { margin-left: 8px; }
.clock { width: 71px; display: flex; flex-direction: column; text-align: right; line-height: 16px; }
.bell { margin-left: 8px; }

/* floating panels */
.ime { position: absolute; right: 47px; bottom: 57px; width: 215px; height: 36px; display: flex; align-items: center; gap: 12px; padding-right: 4px; background: #f3f4f6; border: 1px solid #b5b5b8; border-radius: 8px; box-shadow: 0 10px 24px #0005; color: #111; font-size: 20px; }
.grip { width: 23px; height: 34px; margin-right: -7px; border-right: 1px solid #d5d5d8; display: flex; align-items: center; justify-content: center; }
.grip i { width: 3px; height: 16px; border-radius: 2px; background: #777; }
.dock { position: absolute; right: -23px; bottom: 82px; width: 42px; height: 42px; border-radius: 50%; background: #000; border: 1px solid #3b6178; justify-content: flex-start; padding-left: 12px; }
```
